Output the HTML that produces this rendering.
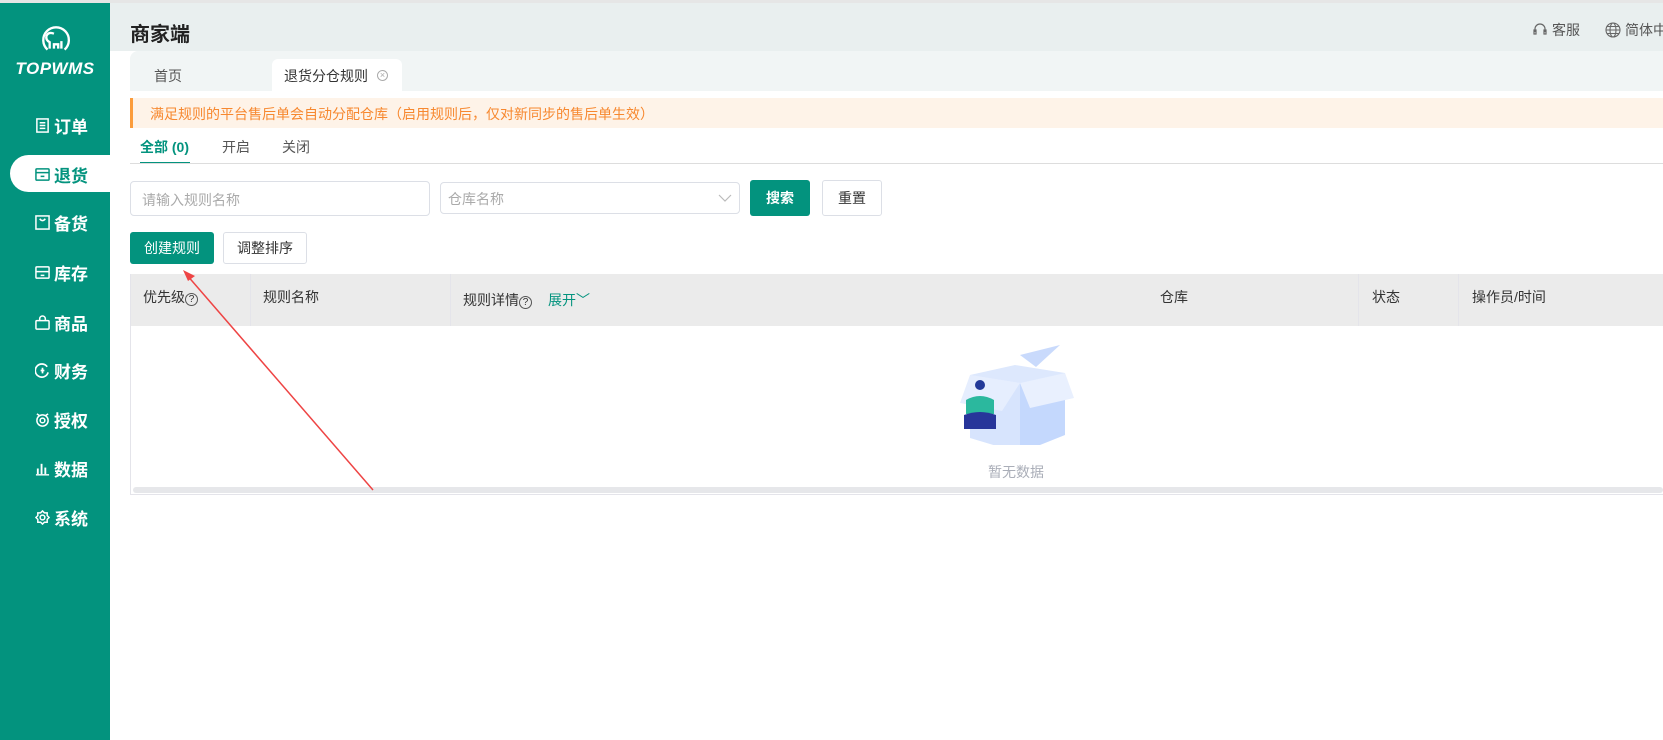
<!DOCTYPE html>
<html><head><meta charset="utf-8">
<style>
*{margin:0;padding:0;box-sizing:border-box}
body{width:1663px;height:740px;overflow:hidden;background:#fff;font-family:"Liberation Sans","Noto Sans CJK SC",sans-serif;position:relative;color:#333}
.a{position:absolute}
.side{left:0;top:3px;width:110px;height:737px;background:#03937e}
.mi{position:absolute;left:35px;height:24px;display:flex;align-items:center;color:#fff;font-size:17px;font-weight:bold}
.mi svg{width:15px;height:15px;margin-right:4px}
.pill{left:10px;top:155px;width:100px;height:37px;background:#fff;border-radius:19px 0 0 19px}
.btn{position:absolute;border-radius:3px;font-size:14px;display:flex;align-items:center;justify-content:center}
.th{position:absolute;font-size:14px;color:#333}
.vd{position:absolute;top:274px;width:1px;height:52px;background:#e4e4ea}
</style></head><body>
<div class="a" style="left:0;top:0;width:1663px;height:3px;background:#e6e6e6"></div>
<div class="a" style="left:110px;top:3px;width:1553px;height:48px;background:#e9efef"></div>
<div class="a" style="left:130px;top:18px;font-size:20px;font-weight:bold;color:#222">商家端</div>
<div class="a" style="left:1532px;top:20px;font-size:14px;color:#555;display:flex;align-items:center"><svg width="16" height="16" viewBox="0 0 16 16" fill="none" stroke="#666" stroke-width="1.2"><path d="M3 10V7a5 5 0 0 1 10 0v3"/><rect x="2" y="8" width="2" height="4"/><rect x="12" y="8" width="2" height="4"/></svg><span style="margin-left:4px">客服</span></div>
<div class="a" style="left:1605px;top:20px;font-size:14px;color:#555;display:flex;align-items:center;white-space:nowrap"><svg width="16" height="16" viewBox="0 0 16 16" fill="none" stroke="#666" stroke-width="1.1"><circle cx="8" cy="8" r="7"/><ellipse cx="8" cy="8" rx="3" ry="7"/><path d="M1 8h14M2 4.5h12M2 11.5h12"/></svg><span style="margin-left:4px">简体中文</span></div>
<div class="a" style="left:130px;top:51px;width:1533px;height:40px;background:#f1f5f5;border-radius:8px 0 0 0"></div>
<div class="a" style="left:154px;top:66px;font-size:14px;color:#555">首页</div>
<div class="a" style="left:272px;top:59px;width:130px;height:32px;background:#fff;border-radius:6px 6px 0 0"></div>
<div class="a" style="left:284px;top:66px;font-size:14px;color:#333">退货分仓规则</div>
<div class="a" style="left:377px;top:70px;width:11px;height:11px;border:1px solid #aaa;border-radius:50%;font-size:9px;line-height:9px;text-align:center;color:#aaa">×</div>
<div class="a" style="left:130px;top:98px;width:1533px;height:30px;background:#fef3e8;border-left:3px solid #fb9c3c"></div>
<div class="a" style="left:150px;top:104px;font-size:14px;color:#f7882f">满足规则的平台售后单会自动分配仓库（启用规则后，仅对新同步的售后单生效）</div>
<div class="a" style="left:140px;top:137px;font-size:14px;color:#03937e;font-weight:bold">全部 (0)</div>
<div class="a" style="left:140px;top:162px;width:50px;height:2px;background:#03937e"></div>
<div class="a" style="left:222px;top:137px;font-size:14px;color:#555">开启</div>
<div class="a" style="left:282px;top:137px;font-size:14px;color:#555">关闭</div>
<div class="a" style="left:130px;top:163px;width:1533px;height:1px;background:#ddd"></div>
<div class="a" style="left:130px;top:181px;width:300px;height:35px;border:1px solid #dcdfe6;border-radius:4px;font-size:14px;color:#aaa;padding:8px 11px">请输入规则名称</div>
<div class="a" style="left:440px;top:182px;width:300px;height:32px;border:1px solid #dcdfe6;border-radius:4px;font-size:14px;color:#aaa;padding:6px 7px">仓库名称</div>
<svg class="a" style="left:718px;top:193px" width="14" height="10" viewBox="0 0 14 10" fill="none" stroke="#bbb" stroke-width="1.2"><path d="M1 2l6 6 6-6"/></svg>
<div class="btn" style="left:750px;top:180px;width:60px;height:36px;background:#03937e;color:#fff;font-weight:bold">搜索</div>
<div class="btn" style="left:822px;top:180px;width:60px;height:36px;border:1px solid #dcdfe6;color:#333">重置</div>
<div class="btn" style="left:130px;top:232px;width:84px;height:32px;background:#03937e;color:#fff">创建规则</div>
<div class="btn" style="left:223px;top:232px;width:84px;height:32px;border:1px solid #dcdfe6;color:#333">调整排序</div>
<div class="a" style="left:130px;top:274px;width:1533px;height:221px;border:1px solid #e4e4ea;border-right:none"></div>
<div class="a" style="left:131px;top:274px;width:1532px;height:52px;background:#ebebeb"></div>
<div class="vd" style="left:250px"></div><div class="vd" style="left:450px"></div><div class="vd" style="left:1358px"></div><div class="vd" style="left:1458px"></div>
<div class="th" style="left:143px;top:287px">优先级<span style="border:1px solid #555;border-radius:50%;display:inline-block;width:13px;height:13px;line-height:11px;text-align:center;font-size:10px">?</span></div>
<div class="th" style="left:263px;top:287px">规则名称</div>
<div class="th" style="left:463px;top:290px">规则详情<span style="border:1px solid #555;border-radius:50%;display:inline-block;width:13px;height:13px;line-height:11px;text-align:center;font-size:10px">?</span><span style="color:#03937e;margin-left:16px">展开﹀</span></div>
<div class="th" style="left:1160px;top:287px">仓库</div>
<div class="th" style="left:1372px;top:287px">状态</div>
<div class="th" style="left:1472px;top:287px">操作员/时间</div>
<div class="a" style="left:133px;top:487px;width:1530px;height:6px;background:#e6e7ea;border-radius:3px"></div>
<svg class="a" style="left:940px;top:345px" width="150" height="100" viewBox="0 0 150 100">
<path d="M80 10l40-10-24 22z" fill="#c9dafc"/>
<path d="M30 30l45-10 50 8-45 10z" fill="#dde8fd"/>
<path d="M30 30l50 8v70l-50-15z" fill="#d7e4fd"/>
<path d="M80 38l45-10v62l-45 18z" fill="#c4d8fd"/>
<path d="M80 38l-18 28-42-8 10-28z" fill="#e6eefe"/>
<path d="M80 38l10 25 44-10-9-25z" fill="#e9f0fe"/>
<circle cx="40" cy="40" r="5" fill="#233a99"/>
<path d="M26 55q14-8 28 0v14H26z" fill="#2bb89e"/>
<path d="M24 70q16-6 32 0v14H24z" fill="#27359a"/>
</svg>
<div class="a" style="left:988px;top:462px;font-size:14px;color:#aaaeb8">暂无数据</div>
<svg class="a" style="left:0;top:0" width="1663" height="740"><line x1="373" y1="490" x2="186" y2="274" stroke="#ee4444" stroke-width="1.5"/><path d="M183 270l12 6-7 5z" fill="#ee4444"/></svg>
<div class="a side">
<svg class="a" style="left:39px;top:20px" width="32" height="32" viewBox="0 0 30 30" fill="none" stroke="#fff" stroke-width="2.2"><path d="M8 25A12 12 0 1 1 24 25"/><path d="M10 24v-6q-4-2-3-6 2-4 7-2M14 24v-4h4v4M21 24v-7"/></svg>
<div class="a" style="left:0;width:110px;top:56px;text-align:center;color:#fff;font-size:17px;font-weight:bold;font-style:italic;letter-spacing:0.5px">TOPWMS</div>
<div class="a pill" style="top:152px"></div>
<div class="mi" style="top:110px"><svg viewBox="0 0 16 16" fill="none" stroke="#fff" stroke-width="1.6"><rect x="2" y="1" width="12" height="14"/><path d="M5 5h6M5 8h6M5 11h6"/></svg>订单</div>
<div class="mi" style="top:159px;color:#03937e"><svg viewBox="0 0 16 16" fill="none" stroke="#03937e" stroke-width="1.6"><rect x="1" y="2" width="14" height="12" rx="1"/><path d="M1 6h14M6 10h4"/></svg>退货</div>
<div class="mi" style="top:207px"><svg viewBox="0 0 16 16" fill="none" stroke="#fff" stroke-width="1.6"><rect x="1" y="1" width="14" height="14"/><path d="M5 4q3 4 6 0"/></svg>备货</div>
<div class="mi" style="top:257px"><svg viewBox="0 0 16 16" fill="none" stroke="#fff" stroke-width="1.6"><rect x="1" y="2" width="14" height="12" rx="1"/><path d="M1 7h14M6 11h4"/></svg>库存</div>
<div class="mi" style="top:307px"><svg viewBox="0 0 16 16" fill="none" stroke="#fff" stroke-width="1.6"><rect x="1" y="6" width="14" height="9" rx="1"/><path d="M5 6V4a3 3 0 0 1 6 0v2"/></svg>商品</div>
<div class="mi" style="top:355px"><svg viewBox="0 0 16 16" fill="none" stroke="#fff" stroke-width="1.8"><path d="M13 4a7 7 0 1 0 1 6"/><path d="M8 5v6M6 8h4"/></svg>财务</div>
<div class="mi" style="top:404px"><svg viewBox="0 0 16 16" fill="none" stroke="#fff" stroke-width="1.6"><circle cx="8" cy="9" r="6"/><circle cx="8" cy="9" r="2.5"/><path d="M2 2l3 2M14 2l-3 2"/></svg>授权</div>
<div class="mi" style="top:453px"><svg viewBox="0 0 16 16" fill="#fff"><rect x="2" y="8" width="2" height="6"/><rect x="6" y="3" width="2" height="11"/><rect x="10" y="7" width="2" height="7"/><rect x="1" y="14" width="14" height="1.5"/></svg>数据</div>
<div class="mi" style="top:502px"><svg viewBox="0 0 16 16" fill="none" stroke="#fff" stroke-width="1.6"><circle cx="8" cy="8" r="2.5"/><path d="M8 1l2 2 3 0 0 3 2 2-2 2 0 3-3 0-2 2-2-2-3 0 0-3-2-2 2-2 0-3 3 0z"/></svg>系统</div>
</div>
</body></html>
